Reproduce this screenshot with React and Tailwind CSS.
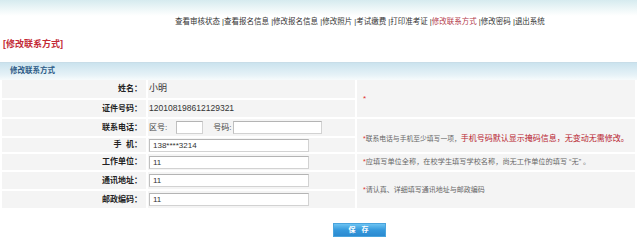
import React from 'react';

const cjk = "font-['Liberation_Sans','Noto_Sans_CJK_SC',sans-serif]";

const navItems = ['查看审核状态', '查看报名信息', '修改报名信息', '修改照片', '考试缴费', '打印准考证', '修改联系方式', '修改密码', '退出系统'];

const Label = ({ children }) => (
  <td className="border-r-2 border-white pr-[4px] text-right font-bold text-[8px] text-[#222] whitespace-nowrap">
    {children}
  </td>
);

const Input = ({ value, className }) => (
  <input
    defaultValue={value}
    className={`h-[13px] border border-[#d2d2d2] border-t-[#b4b4b4] border-l-[#c0c0c0] bg-white px-[3px] text-[8px] text-[#333] outline-none ${className}`}
  />
);

export default function App() {
  return (
    <div className={`w-[637px] h-[249px] overflow-hidden bg-white ${cjk}`}>
      <div className="h-[34px] bg-[linear-gradient(to_bottom,#d6ebef_0px,#eef7f8_9px,#ffffff_16px)] pt-[17px] pl-[175px] text-[7.5px] leading-[10px] text-[#333] whitespace-nowrap">
        {navItems.map((item, i) => (
          <span key={item}>
            {i > 0 && <span> |</span>}
            <span className={item === '修改联系方式' ? 'text-[#b3394a]' : ''}>{item}</span>
          </span>
        ))}
      </div>

      <div className="h-[28px] pl-[3px] pt-[4px] text-[9px] leading-[12px] font-bold text-[#c32a36]">[修改联系方式]</div>

      <div className="h-[18px] border-t border-[#c8dde8] bg-[linear-gradient(to_bottom,#cbe3ee,#e6f2f7_70%,#f7fbfc)] pl-[10px] text-[7.5px] leading-[16px] font-bold text-[#2b5a86]">
        修改联系方式
      </div>

      <table className="mx-[2px] w-[633px] table-fixed border-collapse bg-[#f4f4f4]">
        <colgroup>
          <col className="w-[145px]" />
          <col className="w-[209px]" />
          <col />
        </colgroup>
        <tbody>
          <tr className="h-[19px] border-b-2 border-white">
            <Label>姓名：</Label>
            <td className="border-r-2 border-white pl-[1px] text-[9px] text-[#333]">小明</td>
            <td rowSpan={2} className="pl-[6px] text-[8px] text-[#e0302f] align-middle">*</td>
          </tr>
          <tr className="h-[19px] border-b-2 border-white">
            <Label>证件号码：</Label>
            <td className="border-r-2 border-white pl-[1px] text-[8.5px] text-[#333]">120108198612129321</td>
          </tr>
          <tr className="h-[19px] border-b-2 border-white">
            <Label>联系电话：</Label>
            <td className="border-r-2 border-white pl-[1px] text-[8px] text-[#444]">
              <div className="flex items-center">
                <span className="mr-[9px]">区号:</span>
                <Input className="w-[27px]" />
                <span className="ml-[10px] mr-[2px]">号码:</span>
                <Input className="w-[89px]" />
              </div>
            </td>
            <td rowSpan={2} className="border-b-2 border-white pl-[6px] whitespace-nowrap align-middle">
              <span className="text-[6.8px] text-[#e0302f]">*</span>
              <span className="text-[6.8px] text-[#666]">联系电话与手机至少填写一项，</span>
              <span className="text-[8px] text-[#b8232f]">手机号码默认显示掩码信息，无变动无需修改。</span>
            </td>
          </tr>
          <tr className="h-[16px] border-b-2 border-white">
            <Label>手&nbsp;&nbsp;机：</Label>
            <td className="border-r-2 border-white pl-[1px]">
              <Input value="138****3214" className="w-[160px] block" />
            </td>
          </tr>
          <tr className="h-[18px] border-b-2 border-white">
            <Label>工作单位：</Label>
            <td className="border-r-2 border-white pl-[1px]">
              <Input value="11" className="w-[160px] block" />
            </td>
            <td className="pl-[6px] text-[7.2px] text-[#666] whitespace-nowrap">
              <span className="text-[#e0302f]">*</span>应填写单位全称，在校学生填写学校名称，尚无工作单位的填写 “无” 。
            </td>
          </tr>
          <tr className="h-[19px] border-b-2 border-white">
            <Label>通讯地址：</Label>
            <td className="border-r-2 border-white pl-[1px]">
              <Input value="11" className="w-[160px] block" />
            </td>
            <td rowSpan={2} className="pl-[6px] text-[7px] text-[#666] whitespace-nowrap">
              <span className="text-[#e0302f]">*</span>请认真、详细填写通讯地址与邮政编码
            </td>
          </tr>
          <tr className="h-[18px]">
            <Label>邮政编码：</Label>
            <td className="border-r-2 border-white pl-[1px]">
              <Input value="11" className="w-[160px] block" />
            </td>
          </tr>
        </tbody>
      </table>

      <div className="pt-[15px] pl-[333px]">
        <button className="block h-[14px] w-[53px] bg-[linear-gradient(to_bottom,#6cc3f2,#3599dc_50%,#2b8ad0)] border border-[#4aa4dd] text-[7px] leading-[12px] font-bold text-white tracking-[2px]">
          保 存
        </button>
      </div>
    </div>
  );
}
